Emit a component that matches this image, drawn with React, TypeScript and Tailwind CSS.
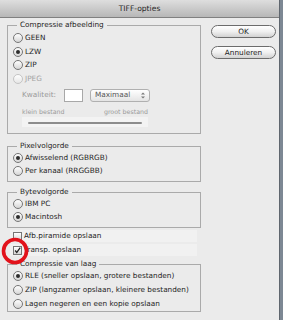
import React from "react";

type RadioProps = { label: string; checked?: boolean; disabled?: boolean; h: string };

function Radio({ label, checked, disabled, h }: RadioProps) {
  return (
    <div className={`flex items-center gap-[2px] pl-[5px] ${h}`}>
      <span
        className={`w-[10px] h-[10px] rounded-full border flex items-center justify-center bg-gradient-to-b from-white to-[#d6d6d6] ${
          disabled ? "border-[#c4c4c4] from-[#f4f4f4] to-[#e6e6e6]" : "border-[#767676]"
        }`}
      >
        {checked && <span className="w-[4px] h-[4px] rounded-full bg-[#2d2d2d]" />}
      </span>
      <span className={disabled ? "text-[#a3a3a3]" : ""}>{label}</span>
    </div>
  );
}

function Checkbox({ label, checked, h }: { label: string; checked?: boolean; h: string }) {
  return (
    <div className={`flex items-center ml-[3px] mr-[4px] ${h}`}>
      <div className="flex items-center gap-[2px] pl-[3px] w-full h-[12px] bg-[#f1f1f1]">
        <span className="w-[9px] h-[9px] border border-[#767676] bg-gradient-to-b from-white to-[#d6d6d6] flex items-center justify-center">
          {checked && (
            <svg width="9" height="9" viewBox="0 0 9 9">
              <path d="M1.5 4.5 L3.6 7 L8 0.8" fill="none" stroke="#222" strokeWidth="1.6" />
            </svg>
          )}
        </span>
        <span>{label}</span>
      </div>
    </div>
  );
}

function Group({ title, className, children }: { title: string; className?: string; children: React.ReactNode }) {
  return (
    <fieldset className={`border border-[#aaaaaa] ${className ?? ""}`}>
      <legend className="ml-[9px] px-[3px] leading-[10px]">{title}</legend>
      {children}
    </fieldset>
  );
}

function Button({ label, className }: { label: string; className?: string }) {
  return (
    <div
      className={`w-[65px] h-[13px] rounded-full border border-[#6c6c6c] bg-gradient-to-b from-white via-[#f0f0f0] to-[#d2d2d2] flex items-center justify-center leading-none ${className ?? ""}`}
    >
      {label}
    </div>
  );
}

export default function App() {
  return (
    <div className="relative w-[283px] h-[320px] overflow-hidden bg-[#7d8894] flex font-['DejaVu_Sans',sans-serif] text-[7.3px] text-[#1e1e1e]">
      <div className="w-[280px] h-full bg-[#ebebeb] border-r border-[#5f666e] flex flex-col">
        {/* title bar */}
        <div className="h-[18px] shrink-0 bg-gradient-to-b from-[#dedede] to-[#b7b7b7] border-b border-[#808080] flex items-center justify-center text-[7.6px] text-[#2a2a2a]">
          TIFF-opties
        </div>

        <div className="flex">
          <div className="w-[194px] ml-[7px] pt-[2px] flex flex-col leading-none">
            <Group title="Compressie afbeelding" className="pb-[6px]">
              <div className="pt-[1px]">
                <Radio label="GEEN" h="h-[14px]" />
                <Radio label="LZW" checked h="h-[13px]" />
                <Radio label="ZIP" h="h-[14px]" />
                <Radio label="JPEG" disabled h="h-[14px]" />
              </div>
              <div className="flex items-center h-[14px] mt-[2px] pl-[14px] text-[#9a9a9a]">
                <span className="w-[42px]">Kwaliteit:</span>
                <span className="w-[19px] h-[13px] bg-white border border-[#a8a8a8]" />
                <div className="ml-[7px] w-[60px] h-[13px] rounded-[3px] border border-[#b0b0b0] bg-gradient-to-b from-white to-[#e4e4e4] flex items-center justify-between pl-[4px] pr-[4px] text-[#555]">
                  <span>Maximaal</span>
                  <svg width="4" height="7" viewBox="0 0 4 7">
                    <path d="M0 2.6 L2 0.4 L4 2.6 Z M0 4.4 L2 6.6 L4 4.4 Z" fill="#777" />
                  </svg>
                </div>
              </div>
              <div className="flex justify-between w-[126px] ml-[14px] mt-[5px] h-[10px] items-center text-[6.3px] text-[#9a9a9a]">
                <span>klein bestand</span>
                <span>groot bestand</span>
              </div>
              <div className="w-[126px] h-[10px] ml-[14px] bg-[#f3f3f3] flex items-end pb-[3px] px-[6px]">
                <div className="w-full h-[2px] rounded-full bg-[#8c8c8c]" />
              </div>
            </Group>

            <Group title="Pixelvolgorde" className="mt-[7px] pb-[3px]">
              <Radio label="Afwisselend (RGBRGB)" checked h="h-[13px]" />
              <Radio label="Per kanaal (RRGGBB)" h="h-[14px]" />
            </Group>

            <Group title="Bytevolgorde" className="mt-[5px] pb-[3px]">
              <Radio label="IBM PC" h="h-[13px]" />
              <Radio label="Macintosh" checked h="h-[14px]" />
            </Group>

            <div className="mt-[1px]">
              <Checkbox label="Afb.piramide opslaan" h="h-[14px]" />
              <Checkbox label="Transp. opslaan" checked h="h-[14px]" />
            </div>

            <Group title="Compressie van laag" className="mt-[2px] pb-[1px]">
              <Radio label="RLE (sneller opslaan, grotere bestanden)" checked h="h-[14px]" />
              <Radio label="ZIP (langzamer opslaan, kleinere bestanden)" h="h-[14px]" />
              <Radio label="Lagen negeren en een kopie opslaan" h="h-[13px]" />
            </Group>
          </div>

          <div className="ml-[10px] pt-[7px] flex flex-col">
            <Button label="OK" />
            <Button label="Annuleren" className="mt-[8px]" />
          </div>
        </div>
      </div>

      {/* red annotation circle */}
      <svg className="absolute left-[1px] top-[237px]" width="28" height="28" viewBox="0 0 28 28">
        <circle cx="14" cy="14" r="11.5" fill="none" stroke="#e2121b" strokeWidth="3.6" />
      </svg>
    </div>
  );
}
